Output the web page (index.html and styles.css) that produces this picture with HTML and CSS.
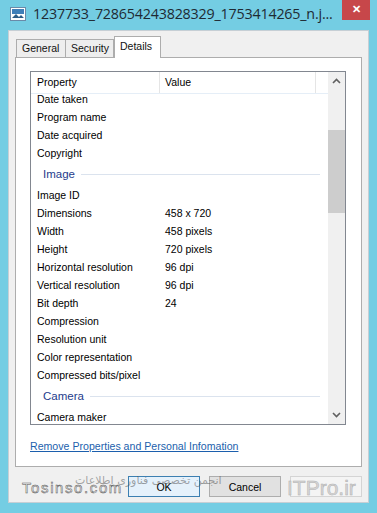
FILE: index.html
```html
<!DOCTYPE html>
<html lang="en">

<head>
    <meta charset="UTF-8">
    <title>Properties</title>
    <link rel="stylesheet" href="styles.css">
</head>

<body>
    <div class="window">
        <!-- Title bar -->
        <div class="titlebar">
            <svg class="app-icon" width="16" height="14" viewBox="0 0 16 14">
                <rect x="0.5" y="0.5" width="15" height="13" fill="#fff" stroke="#6a8aa8"/>
                <rect x="2" y="2" width="12" height="5" fill="#3f7fb8"/>
                <path d="M2 11 L6 7 L9 10 L11 8 L14 11 Z" fill="#2d5d86"/>
            </svg>
            <span class="title">1237733_728654243828329_1753414265_n.j...</span>
            <div class="close">&#x2715;</div>
        </div>

        <div class="client">
            <!-- Tabs -->
            <div class="tabs">
                <div class="tab">General</div>
                <div class="tab">Security</div>
                <div class="tab active">Details</div>
            </div>

            <div class="panel">
                <div class="listview">
                    <div class="list-main">
                        <div class="header">
                            <div class="col-prop">Property</div>
                            <div class="col-val">Value</div>
                            <div class="col-rest"></div>
                        </div>
                        <div class="rows">
                            <div class="row first"><span class="prop">Date taken</span></div>
                            <div class="row"><span class="prop">Program name</span></div>
                            <div class="row"><span class="prop">Date acquired</span></div>
                            <div class="row"><span class="prop">Copyright</span></div>
                            <div class="group"><span>Image</span><i></i></div>
                            <div class="row"><span class="prop">Image ID</span></div>
                            <div class="row"><span class="prop">Dimensions</span><span class="val">458 x 720</span></div>
                            <div class="row"><span class="prop">Width</span><span class="val">458 pixels</span></div>
                            <div class="row"><span class="prop">Height</span><span class="val">720 pixels</span></div>
                            <div class="row"><span class="prop">Horizontal resolution</span><span class="val">96 dpi</span></div>
                            <div class="row"><span class="prop">Vertical resolution</span><span class="val">96 dpi</span></div>
                            <div class="row"><span class="prop">Bit depth</span><span class="val">24</span></div>
                            <div class="row"><span class="prop">Compression</span></div>
                            <div class="row"><span class="prop">Resolution unit</span></div>
                            <div class="row"><span class="prop">Color representation</span></div>
                            <div class="row"><span class="prop">Compressed bits/pixel</span></div>
                            <div class="group"><span>Camera</span><i></i></div>
                            <div class="row"><span class="prop">Camera maker</span></div>
                        </div>
                    </div>
                    <div class="scrollbar">
                        <svg class="arrow" width="9" height="6" viewBox="0 0 9 6"><path d="M1 5 L4.5 1.5 L8 5" fill="none" stroke="#606060" stroke-width="1.6"/></svg>
                        <div class="track">
                            <div class="thumb"></div>
                        </div>
                        <svg class="arrow" width="9" height="6" viewBox="0 0 9 6"><path d="M1 1 L4.5 4.5 L8 1" fill="none" stroke="#606060" stroke-width="1.6"/></svg>
                    </div>
                </div>

                <a class="link" href="#">Remove Properties and Personal Infomation</a>
            </div>

            <div class="buttons">
                <button class="btn default">OK</button>
                <button class="btn">Cancel</button>
                <button class="btn disabled">Apply</button>
            </div>

            <!-- watermark over the button row -->
            <div class="wm wm-fa" dir="rtl">انجمن تخصصی فناوری اطلاعات</div>
            <div class="wm wm-site">Tosinso.com</div>
            <div class="wm wm-itpro">ITPro.ir</div>
        </div>
    </div>
</body>

</html>
```

FILE: styles.css
```css
body {
    margin: 0;
    font-family: "Liberation Sans", Arial, sans-serif;
    font-size: 10.5px;
    color: #000;
}

.window {
    width: 377px;
    height: 513px;
    background-color: #74cde3;
    display: flex;
    flex-direction: column;
    overflow: hidden;
}

.titlebar {
    height: 30px;
    display: flex;
    align-items: flex-start;
    position: relative;
}

.app-icon {
    margin: 7px 0 0 10px;
}

.title {
    margin: 4px 0 0 7px;
    font-family: "Open Sans", sans-serif;
    font-size: 14.3px;
    color: #1e2a33;
    letter-spacing: -0.2px;
}

.close {
    position: absolute;
    top: 0;
    right: 7px;
    width: 28px;
    height: 20px;
    background-color: #c7474a;
    color: #fff;
    font-size: 11px;
    font-weight: bold;
    text-align: center;
    line-height: 19px;
}

.client {
    position: relative;
    margin: 0 8px;
    height: 473px;
    background-color: #f0f0f0;
    border: 1px solid #c6cfd5;
    box-sizing: border-box;
    padding: 5px 6px 0 6px;
}

.tabs {
    display: flex;
    align-items: flex-end;
    height: 21px;
    padding-left: 1px;
}

.tab {
    height: 18px;
    padding: 0 5px;
    line-height: 17px;
    background-color: #eeeeee;
    border: 1px solid #adadad;
    border-bottom: none;
    box-sizing: border-box;
    margin-right: -1px;
    color: #111;
}

.tab:first-child {
    width: 50px;
}

.tab:nth-child(2) {
    width: 49px;
}

.tab.active {
    width: 47px;
    height: 22px;
    line-height: 19px;
    background-color: #fff;
    margin-bottom: -1px;
    position: relative;
    z-index: 1;
    margin-left: 1px;
}

.panel {
    height: 410px;
    background-color: #fff;
    border: 1px solid #adadad;
    box-sizing: border-box;
    padding: 13px 15px 0 14px;
}

.listview {
    height: 354px;
    border: 1px solid #828790;
    box-sizing: border-box;
    display: flex;
}

.list-main {
    flex: 1;
    display: flex;
    flex-direction: column;
    overflow: hidden;
}

.header {
    height: 21px;
    display: flex;
    flex-shrink: 0;
    border-bottom: 1px solid #e5eef7;
    background-color: #fff;
    position: relative;
    z-index: 1;
    line-height: 21px;
}

.col-prop {
    width: 122px;
    padding-left: 6px;
    border-right: 1px solid #e5e5e5;
}

.col-val {
    width: 150px;
    padding-left: 5px;
    border-right: 1px solid #e5e5e5;
}

.col-rest {
    flex: 1;
}

.rows {
    margin-top: -4px;
}

.row {
    height: 18px;
    line-height: 18px;
    display: flex;
    padding-left: 6px;
}

.prop {
    width: 122px;
}

.val {
    padding-left: 6px;
}

.group {
    height: 24px;
    display: flex;
    align-items: center;
    padding-left: 12px;
    padding-right: 8px;
    color: #1e3c8c;
    font-size: 11.5px;
}

.group i {
    flex: 1;
    height: 1px;
    margin-left: 6px;
    background-color: #dbe3ee;
}

.scrollbar {
    width: 17px;
    background-color: #f0f0f0;
    display: flex;
    flex-direction: column;
    align-items: center;
}

.arrow {
    margin: 6px 0;
}

.track {
    flex: 1;
    width: 100%;
    padding-top: 40px;
}

.thumb {
    height: 83px;
    background-color: #cdcdcd;
}

.link {
    display: block;
    margin-top: 15px;
    color: #1c5fad;
    text-decoration: underline;
    font-size: 10.6px;
}

.buttons {
    display: flex;
    justify-content: flex-end;
    gap: 9px;
    margin-top: 9px;
}

.btn {
    width: 72px;
    height: 21px;
    font-family: inherit;
    font-size: 10.5px;
    background-color: #e1e1e1;
    border: 1px solid #adadad;
    padding: 0;
    color: #000;
}

.btn.default {
    background-color: #e5f1fb;
    border-color: #3c7fb1;
}

.btn.disabled {
    background-color: #f4f4f4;
    border-color: #d4d4d4;
    color: #f4f4f4;
}

.wm {
    position: absolute;
    pointer-events: none;
    white-space: nowrap;
}

.wm-site {
    left: 13px;
    top: 448px;
    font-size: 15px;
    color: #f4f4f4;
    -webkit-text-stroke: 0.5px #555;
    letter-spacing: 1.6px;
}

.wm-fa {
    left: 66px;
    top: 443px;
    font-family: "DejaVu Sans", sans-serif;
    font-size: 11px;
    color: rgba(80, 80, 80, 0.5);
    letter-spacing: 0.5px;
}

.wm-itpro {
    left: 278px;
    top: 445px;
    font-size: 21px;
    color: #d6d6d6;
    -webkit-text-stroke: 0.5px #b0b0b0;
}
```
